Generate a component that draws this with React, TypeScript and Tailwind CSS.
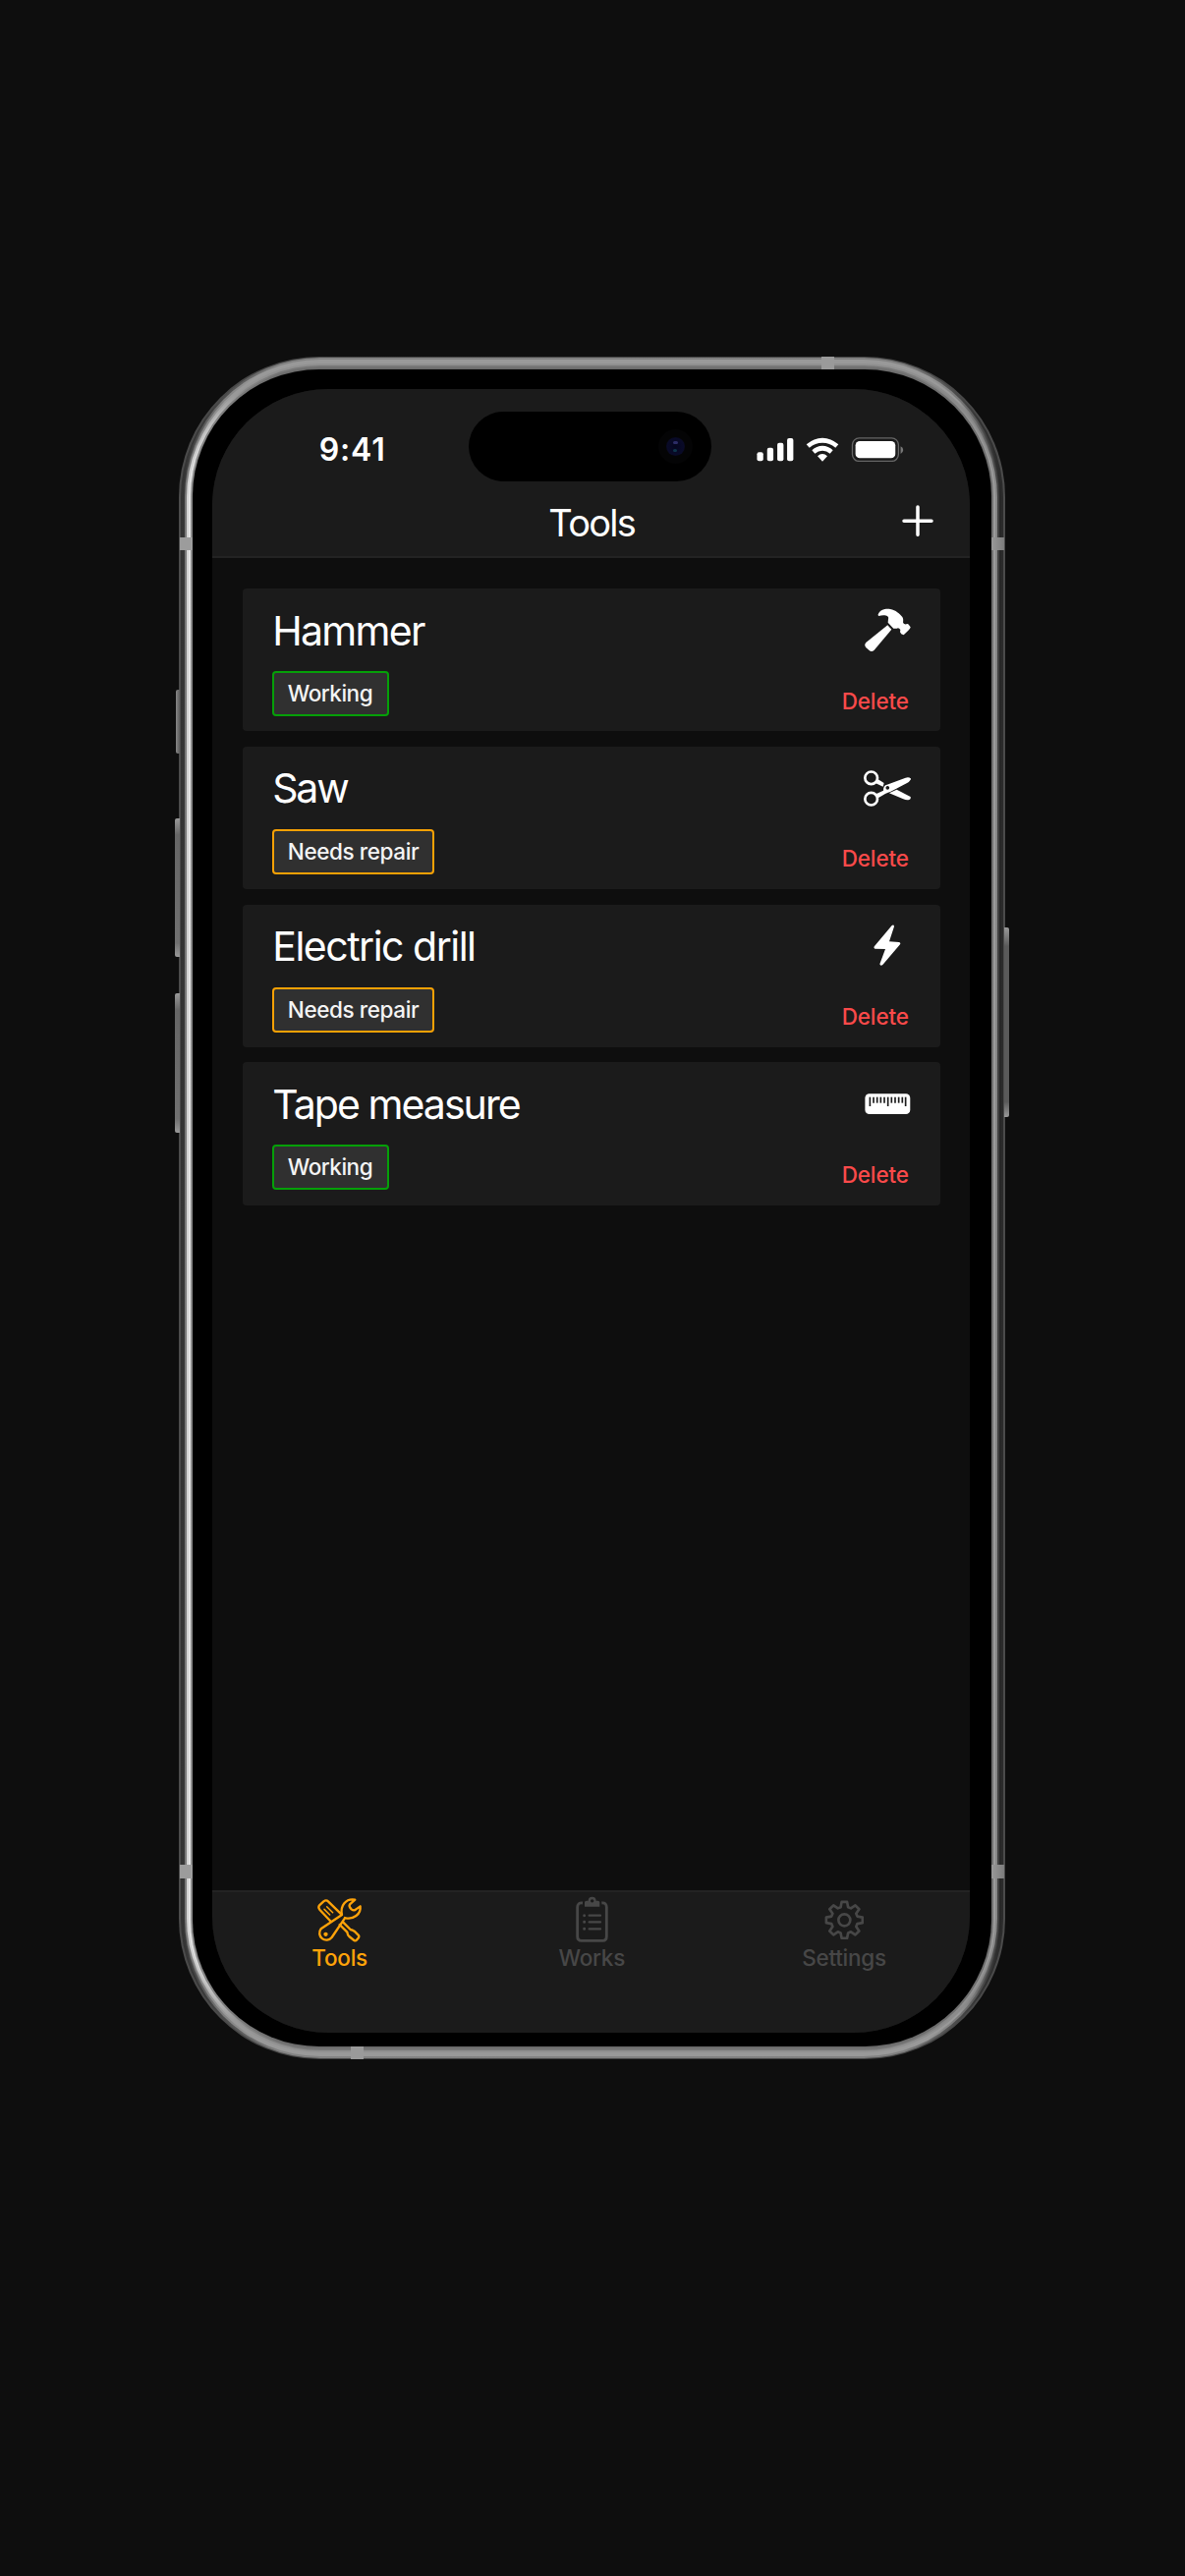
import type { ReactNode } from "react";

type Status = "Working" | "Needs repair";

function HammerIcon() {
  return (
    <svg viewBox="300 85 141 134" className="h-[44.7px] w-[47px]" fill="#fff">
      <path d="M370 137 L382 150 L329 213 Q321 220 314 214 L303 204 Q298 197 304 190 Z" />
      <path d="M341 104 C347 90 362 86 378 88 C395 91 407 102 415 112 C420 120 416 127 418 131 Q422 136 430 133 Q433 132 440 143 Q441 147 419 167 Q410 165 408 158 L409 151 Q404 143 398 147 L388 147 L371 129 L372 118 C 376 108 360 104 343 109 Q340 108 341 104 Z" />
    </svg>
  );
}

function ScissorsIcon() {
  return (
    <svg viewBox="297 101 145 111" className="mt-[1px] h-[37px] w-[48.3px]" fill="#fff">
      <circle cx="320" cy="124.5" r="19" fill="none" stroke="#fff" strokeWidth="8" />
      <circle cx="320" cy="188.500" r="19" fill="none" stroke="#fff" strokeWidth="8" />
      <path d="M340 128 L359 140 L356 151 L334 141 Z" />
      <path
        fillRule="evenodd"
        d="M334 174 L357 163 Q357 147 368 145 L425 124 Q436 121 442 127 Q438 136 428 141 L378 167 Q366 170 341 186 Z M370 149 a5.500 5.500 0 1 0 0.010 0 Z"
      />
      <path d="M375 171 L398 160 L440 182 Q442 188 436 191 Q428 193 418 189 Z" />
    </svg>
  );
}

function BoltIcon() {
  return (
    <svg viewBox="329 93 83 127" className="mr-[10px] h-[42.3px] w-[27.700px]" fill="#fff">
      <path d="M385 96 Q391 92 392 99 L377 145 L407 147 Q413 149 410 154 L357 216 Q350 221 348 214 L365 168 L333 167 Q328 164 332 159 Z" />
    </svg>
  );
}

const ticks = [316, 327, 338, 349, 360, 371, 382, 393, 404, 415, 425];

function RulerIcon() {
  return (
    <svg viewBox="300 128 140 64" className="h-[21.3px] w-[46.700px]">
      <rect x="301" y="129" width="138" height="62" rx="13" fill="#fff" />
      {ticks.map((x, i) => (
        <path key={x} d={`M${x} 139V${i % 5 === 0 ? 167 : 157}`} stroke="#1b1b1b" strokeWidth="5" />
      ))}
    </svg>
  );
}

function ToolsIcon() {
  return (
    <svg viewBox="455 153 142 140" className="h-[46.700px] w-[47.3px]" fill="none" stroke="#ffa309" strokeWidth="7" strokeLinejoin="round" strokeLinecap="round">
      <path d="M499 227 L465 191 Q459 184 465 177 L477 166 Q485 160 491 166 L531 205" />
      <path d="M479 190 L496 207 M487 182 L505 200" strokeWidth="4.500" />
      <path d="M526 237 L549 260 Q550 268 555 273 L570 285 Q575 288 579 283 L583 278 Q587 273 583 269 L571 257 Q565 253 559 252 L537 230" />
      <path d="M542 217 L502 276 A20.500 20.500 0 1 1 469 250 L533 207 C527 180 545 156 573 161 L557 175 Q553 181 562 190 Q570 196 576 190 L589 181 C592 205 568 223 542 216" />
      <circle cx="483.500" cy="266.500" r="6.500" fill="#ffa309" stroke="none" />
    </svg>
  );
}

function ClipboardIcon() {
  return (
    <svg viewBox="137 88 100 142" className="h-[47.3px] w-[33.3px]" fill="none" stroke="#474747" strokeWidth="8.500">
      <path d="M158 109 Q142 107 142 122 V211 Q142 224 155 224 H219 Q231 224 231 211 V122 Q231 107 216 109" />
      <path
        fill="#474747"
        stroke="none"
        fillRule="evenodd"
        d="M164 107 Q164 102 170 102 H175 A12 12 0 0 1 199 102 H204 Q210 102 210 107 V120 H164 Z M187 97.500 a5 5 0 1 0 0.010 0 Z"
      />
      <path d="M178 147 H212 M178 167 H212 M178 188 H212" strokeLinecap="round" strokeWidth="7" />
      <path d="M163 147 h0.010 M163 167 h0.010 M163 188 h0.010" strokeLinecap="round" strokeWidth="9" />
    </svg>
  );
}

const gearPath = (() => {
  const points: string[] = [];
  const corners: [number, number][] = [
    [-16, 41],
    [-8.500, 56],
    [8.500, 56],
    [16, 41],
  ];
  for (let tooth = 0; tooth < 8; tooth++) {
    for (const [offset, radius] of corners) {
      const a = ((tooth * 45 + offset - 90) * Math.PI) / 180;
      points.push(`${(radius * Math.cos(a)).toFixed(2)} ${(radius * Math.sin(a)).toFixed(2)}`);
    }
  }
  return `M${points.join("L")}Z`;
})();

function GearIcon() {
  return (
    <svg viewBox="-61 -61 122 122" className="h-[40.700px] w-[40.700px]" fill="none" stroke="#474747" strokeWidth="8" strokeLinejoin="round">
      <path d={gearPath} />
      <circle r="18" />
    </svg>
  );
}

function StatusIcons() {
  return (
    <svg viewBox="390 284 450 76" className="h-[25.3px] w-[150px]" fill="#fff">
      <rect x="391" y="330" width="19" height="27" rx="6" />
      <rect x="422" y="316" width="19" height="41" rx="6" />
      <rect x="453" y="301" width="19" height="56" rx="6" />
      <rect x="483" y="287" width="19" height="70" rx="6" />
      <path d="M542 306 Q565 286 591 286 Q617 286 640 306 L631 316 Q613 301 591 301 Q569 301 551 316 Z" />
      <path d="M559 324 Q573 310 591 310 Q609 310 623 324 L614 334 Q604 325 591 325 Q578 325 568 334 Z" />
      <path d="M576 342 Q583 335 591 335 Q599 335 606 342 L591 358 Z" />
      <rect x="682.500" y="286.500" width="141" height="71" rx="21" fill="none" stroke="#666" strokeWidth="4" />
      <rect x="692" y="296" width="122" height="52" rx="13" />
      <path d="M830 312 Q838 316 838 323 Q838 331 830 335 Z" fill="#777" />
    </svg>
  );
}

const tools: { name: string; status: Status; icon: ReactNode; spacing: string }[] = [
  { name: "Hammer", status: "Working", icon: <HammerIcon />, spacing: "tracking-[-1.700px]" },
  { name: "Saw", status: "Needs repair", icon: <ScissorsIcon />, spacing: "tracking-[-2.200px]" },
  { name: "Electric drill", status: "Needs repair", icon: <BoltIcon />, spacing: "tracking-[-1.500px]" },
  { name: "Tape measure", status: "Working", icon: <RulerIcon />, spacing: "tracking-[-1.950px]" },
];

function ToolCard({ name, status, icon, spacing }: (typeof tools)[number]) {
  const tag =
    status === "Working"
      ? "w-[119px] border-[#05a008] tracking-[-0.500px]"
      : "w-[165px] border-[#f8a105] tracking-[-0.400px]";
  return (
    <li className="flex h-[145.3px] justify-between rounded-[4px] bg-[#1b1b1b] pr-[30px] pl-[30.500px]">
      <div className="flex flex-col pt-[17.500px]">
        <h2 className={`h-[50px] whitespace-nowrap text-[41px] leading-[50px] text-white ${spacing}`}>{name}</h2>
        <span className={`mt-[16.500px] h-[46px] whitespace-nowrap rounded-[4px] border-2 bg-[#303030] pl-[13.500px] text-[22.5px] leading-[41px] font-[450] text-[#f4f4f4] ${tag}`}>
          {status}
        </span>
      </div>
      <div className="flex flex-col items-end">
        <div className="flex h-[84px] items-center">{icon}</div>
        <button className="mt-[16.500px] h-[28px] pr-[2px] text-[22.5px] leading-[28px] font-[450] tracking-[-0.150px] text-[#fb4a4a]">Delete</button>
      </div>
    </li>
  );
}

function Tab({ icon, label, className }: { icon: ReactNode; label: string; className: string }) {
  return (
    <button className={`flex flex-1 flex-col items-center pt-[3px] ${className}`}>
      <span className="flex h-[50px] items-center">{icon}</span>
      <span className="text-[22.5px] leading-[28px] font-[450] tracking-[-0.250px]">{label}</span>
    </button>
  );
}

/* Metal rim, from the outermost ring inwards. */
const rings = [
  "px-[1.3px] pt-[1px] pb-[1px] rounded-[143px] bg-[linear-gradient(to_right,#4b4b4b,#444_17%,#444_83%,#4b4b4b)]",
  "p-[2px] rounded-[142px] bg-[linear-gradient(to_right,#333,#3a3a3a_3%,#828282_12%,#808080_88%,#333_97%,#2b2b2b)]",
  "p-[2px] rounded-[140px] bg-[linear-gradient(to_right,#343434,#808080_5%,#999_9%,#999_91%,#777_95%,#262626)]",
  "p-[2px] rounded-[138px] bg-[linear-gradient(to_right,#787878,#999_5%,#999_95%,#404040)]",
  "p-[2.2px] rounded-[136px] bg-[linear-gradient(to_right,#d5d5d5,#999_6%,#909090_11%,#909090_89%,#888)]",
  "px-[2.200px] py-[2px] rounded-[134px] bg-[linear-gradient(to_right,#e6e6e6,#888_7%,#777_11%,#777_89%,#9c9c9c)]",
  "p-[2px] rounded-[131px] bg-[linear-gradient(to_right,#8b8b8b,#6c6c6c_11%,#6c6c6c_89%,#707070)]",
];

const Rim = ({ children }: { children: ReactNode }) =>
  rings.reduceRight<ReactNode>((inner, ring) => <div className={ring}>{inner}</div>, children);

const hardware = [
  "left-[-3px] top-[339px] h-[65px] w-[3.500px] rounded-l-[2px] bg-[linear-gradient(to_right,#888,#5c5c5c)]",
  "left-[-4px] top-[470px] h-[141px] w-[4.500px] rounded-l-[2px] bg-[linear-gradient(#999,#666_12%,#707070_90%,#999)]",
  "left-[-4px] top-[648px] h-[142px] w-[4.500px] rounded-l-[2px] bg-[linear-gradient(#999,#666_12%,#707070_90%,#999)]",
  "right-[-4px] top-[581px] h-[193px] w-[4.500px] rounded-r-[2px] bg-[linear-gradient(#999,#5a5a5a_10%,#5a5a5a_92%,#999)]",
  "left-[0.7px] top-[184px] h-[13px] w-[12.700px] bg-[#9c9c9c]",
  "left-[0.7px] top-[1535px] h-[14px] w-[12.700px] bg-[#9c9c9c]",
  "right-[0.7px] top-[184px] h-[13px] w-[12.700px] bg-[linear-gradient(to_right,#999,#7c7c7c)]",
  "right-[0.7px] top-[1535px] h-[14px] w-[12.700px] bg-[linear-gradient(to_right,#999,#7c7c7c)]",
  "left-[654px] top-0 h-[13px] w-[13px] bg-[#9a9a9a]",
  "left-[175px] bottom-0 h-[13px] w-[13px] bg-[#9a9a9a]",
];

export default function App() {
  return (
    <main className="h-[2622px] w-[1206px] bg-[#0e0e0e] pt-[363px] pl-[182.3px] font-['Inter','Liberation_Sans',sans-serif]">
      <div className="relative w-[840.4px]">
        <Rim>
          <div className="h-[1707px] rounded-[129px] bg-black pt-[20px] pr-[21.700px] pl-[20.300px]">
            <div className="flex h-[1672.700px] flex-col overflow-hidden rounded-[118px] bg-[#0e0e0e]">
              <header className="flex h-[172px] shrink-0 flex-col border-b-[2px] border-[#232323] bg-[#1b1b1b]">
                <div className="flex h-[94px] items-start">
                  <div className="w-[261px] pt-[42px] pl-[108.500px] text-[32px] leading-[40px] font-semibold tracking-[0.800px] text-white">
                    9:41
                  </div>
                  <div className="mt-[23px] flex h-[71px] w-[246.300px] items-center justify-end rounded-full bg-black pr-[19px]">
                    <div className="flex size-[35px] items-center justify-center rounded-full bg-[#040405]">
                      <div className="flex size-[19px] flex-col items-center justify-center gap-[5px] rounded-full bg-[radial-gradient(circle,#05061f,#090a28_60%,#060610)]">
                        <span className="h-[3px] w-[5px] rounded-full bg-[#2c2c66]" />
                        <span className="h-[3px] w-[4px] rounded-full bg-[#0d3348]" />
                      </div>
                    </div>
                  </div>
                  <div className="mt-[48.700px] ml-[46px]">
                    <StatusIcons />
                  </div>
                </div>
                <div className="grid h-[76px] grid-cols-3 items-center">
                  <span />
                  <h1 className="mt-[7px] pl-[1px] text-center text-[38px] leading-[46px] tracking-[-1.700px] text-white">Tools</h1>
                  <svg viewBox="835 491 96 96" className="mt-[3px] mr-[37px] h-[32px] w-[32px] justify-self-end" stroke="#fff" strokeWidth="10.500" strokeLinecap="round">
                    <path d="M883 497V582M841 540H925" />
                  </svg>
                </div>
              </header>
              <ul className="flex flex-1 flex-col gap-[15.400px] pt-[31px] pr-[30.500px] pl-[30.500px]">
                {tools.map((tool) => (
                  <ToolCard key={tool.name} {...tool} />
                ))}
              </ul>
              <nav className="flex h-[145px] shrink-0 border-t-[2px] border-[#232323] bg-[#1b1b1b] pl-[1px]">
                <Tab icon={<ToolsIcon />} label="Tools" className="text-[#ffa309]" />
                <Tab icon={<ClipboardIcon />} label="Works" className="text-[#474747]" />
                <Tab icon={<GearIcon />} label="Settings" className="text-[#474747]" />
              </nav>
            </div>
          </div>
        </Rim>
        {hardware.map((part) => (
          <div key={part} className={`absolute ${part}`} />
        ))}
      </div>
    </main>
  );
}
